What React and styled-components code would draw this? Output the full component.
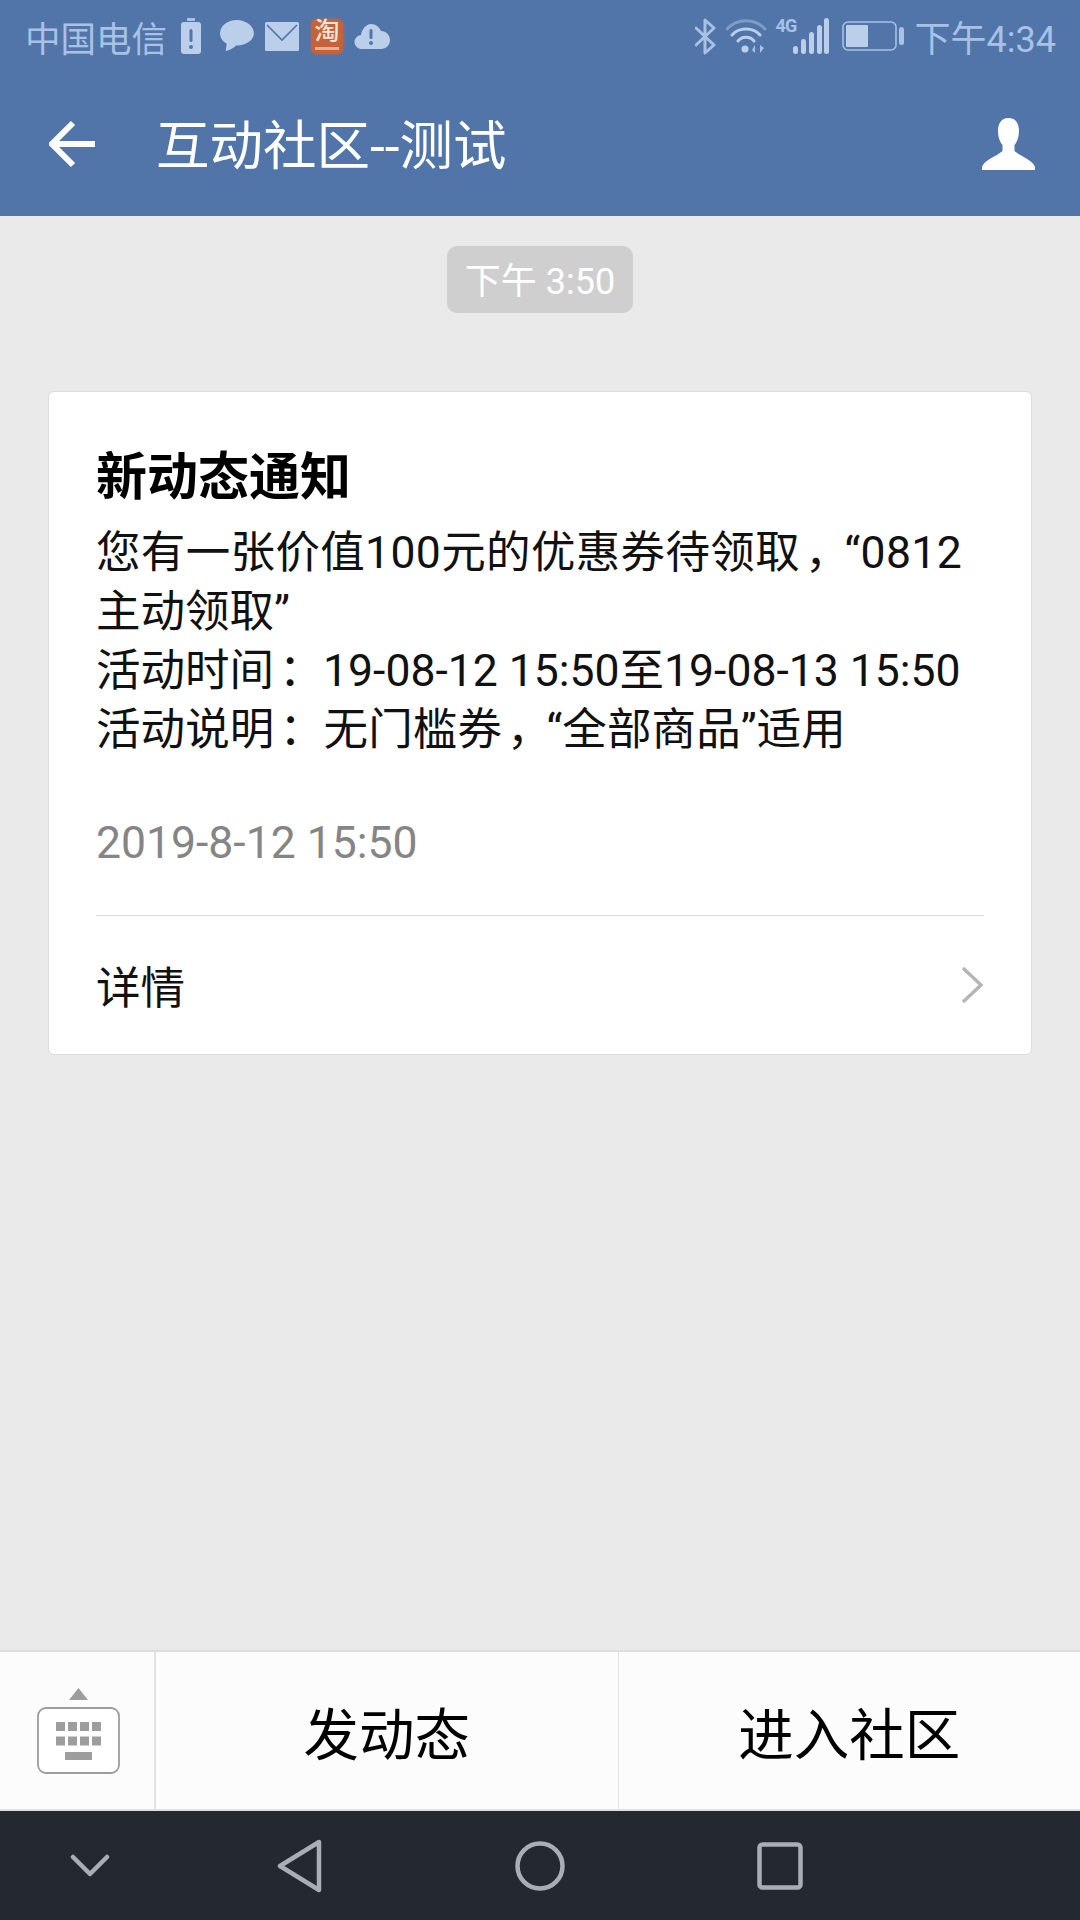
import React from 'react';
import styled, { createGlobalStyle } from 'styled-components';

const GlobalStyle = createGlobalStyle`
  html, body {
    margin: 0;
    padding: 0;
    background: #ebeaeb;
  }
  * {
    box-sizing: border-box;
  }
`;

const FONT = `Roboto, "Noto Sans CJK SC", sans-serif`;

const STATUS = '#a8c1e4';

const BatteryAlert = () => (
  <svg width="20" height="36" viewBox="0 0 20 36">
    <rect x="6" y="0" width="8" height="3" fill={STATUS} />
    <rect x="0" y="4" width="20" height="32" rx="3" fill="#bccfea" />
    <rect x="8.5" y="11" width="3" height="13" rx="1.5" fill="#5175a9" />
    <circle cx="10" cy="29" r="2" fill="#5175a9" />
  </svg>
);

const Bubble = () => (
  <svg width="34" height="32" viewBox="0 0 36 34">
    <path d="M18 0C8 0 0 6 0 14c0 5 3 9 7 11l-1 8c4-1 8-3 11-6h1c10 0 18-6 18-13S28 0 18 0z" fill="#bccfea" />
  </svg>
);

const Mail = () => (
  <svg width="34" height="29" viewBox="0 0 34 29">
    <rect width="34" height="29" rx="1.5" fill="#bccfea" />
    <path d="M2 3l15 15L32 3" fill="none" stroke="#5175a9" strokeWidth="1.6" />
  </svg>
);

const CloudAlert = () => (
  <svg width="36" height="25" viewBox="0 0 36 25">
    <path d="M8 25a7 7 0 0 1-1-14C8 5 12 0 17 0c5 0 8 3 10 7 5 0 9 4 9 9s-4 9-9 9z" fill="#bccfea" />
    <rect x="15.5" y="5" width="3" height="10" rx="1.5" fill="#5175a9" />
    <circle cx="17" cy="19" r="2" fill="#5175a9" />
  </svg>
);

const Bluetooth = () => (
  <svg width="21" height="37" viewBox="1 0 21 37">
    <path d="M2 10l18 17-9 8V2l9 8L2 27" fill="none" stroke={STATUS} strokeWidth="3" strokeLinecap="round" strokeLinejoin="round" />
  </svg>
);

const Wifi = () => (
  <svg width="41" height="36" viewBox="0 0 41 36">
    <path d="M1 11C11 0 29 0 39 11" fill="none" stroke="#7f9cc7" strokeWidth="3" strokeLinecap="round" />
    <path d="M6 17C13 9 27 9 34 17" fill="none" stroke="#bccfea" strokeWidth="3" strokeLinecap="round" />
    <path d="M12 23C16 18 24 18 28 23" fill="none" stroke="#bccfea" strokeWidth="3" strokeLinecap="round" />
    <circle cx="19" cy="31" r="3.5" fill="#bccfea" />
    <path d="M29 35V27l-3 5zM34 27v8l4-5z" fill={STATUS} />
  </svg>
);

const Signal = () => (
  <svg width="36" height="36" viewBox="0 0 36 36">
    <rect x="0" y="28" width="5" height="8" rx="2.5" fill="#bccfea" />
    <rect x="8" y="21" width="5" height="15" rx="2.5" fill="#bccfea" />
    <rect x="16" y="14" width="5" height="22" rx="2.5" fill="#bccfea" />
    <rect x="24" y="7" width="5" height="29" rx="2.5" fill="#bccfea" />
    <rect x="31" y="0" width="5" height="36" rx="2.5" fill="#bccfea" />
  </svg>
);

const Battery = () => (
  <svg width="62" height="30" viewBox="0 0 62 30">
    <rect x="1" y="1" width="53" height="28" rx="5" fill="none" stroke={STATUS} strokeWidth="1.6" />
    <rect x="4" y="4" width="22" height="22" rx="1" fill="#bccfea" />
    <rect x="57" y="6" width="5" height="18" rx="2.5" fill={STATUS} />
  </svg>
);

const BackArrow = () => (
  <svg width="48" height="48" viewBox="0 0 48 48">
    <path d="M46 24H4M24 3L3 24l21 21" fill="none" stroke="#fff" strokeWidth="6" />
  </svg>
);

const UserIcon = () => (
  <svg width="53" height="52" viewBox="0 0 53 52">
    <path d="M26.5 0C19 0 16 6 16 13c0 6 2 11 4.5 14v6C15 38 2 42 0 49v3h53v-3c-2-7-15-11-20.5-16v-6c2.5-3 4.5-8 4.5-14C37 6 34 0 26.5 0z" fill="#fff" />
  </svg>
);

const Chevron = () => (
  <svg width="23" height="38" viewBox="0 0 23 38">
    <path d="M2 2l18 17L2 36" fill="none" stroke="#b5b5b5" strokeWidth="3.4" />
  </svg>
);

const KeyboardIcon = () => (
  <svg width="84" height="86" viewBox="0 0 84 86">
    <path d="M41.5 0l9.5 12H32z" fill="#9d9d9d" />
    <rect x="1" y="20" width="81" height="65" rx="8" fill="#fff" stroke="#9d9d9d" strokeWidth="1.8" />
    {[19, 31, 43, 55].map(x => (
      <g key={x} fill="#9d9d9d">
        <rect x={x} y="34" width="9" height="9" />
        <rect x={x} y="48.5" width="9" height="9" />
      </g>
    ))}
    <rect x="28" y="64" width="27" height="8" fill="#9d9d9d" />
  </svg>
);

const NavHide = () => (
  <svg width="40" height="24" viewBox="0 0 40 24">
    <path d="M3 3l17 17L37 3" fill="none" stroke="#a9aeb6" strokeWidth="4.5" strokeLinecap="round" strokeLinejoin="round" />
  </svg>
);

const NavBack = () => (
  <svg width="46" height="54" viewBox="0 0 46 54">
    <path d="M42 3v48L3 27z" fill="none" stroke="#a9aeb6" strokeWidth="4.5" strokeLinejoin="round" />
  </svg>
);

const NavHome = () => (
  <svg width="50" height="50" viewBox="0 0 50 50">
    <circle cx="25" cy="25" r="22.5" fill="none" stroke="#a9aeb6" strokeWidth="4.5" />
  </svg>
);

const NavRecent = () => (
  <svg width="46" height="48" viewBox="0 0 46 48">
    <rect x="2.5" y="2.5" width="41" height="43" rx="3" fill="none" stroke="#a9aeb6" strokeWidth="4.5" />
  </svg>
);

const App = () => (
  <>
    <GlobalStyle />
    <Screen>
      <Header>
        <StatusBar>
          <StatusGroup>
            <Carrier>中国电信</Carrier>
            <BatteryAlert />
            <BubbleSlot><Bubble /></BubbleSlot>
            <Mail />
            <Taobao>
              <span>淘</span>
              <TaobaoStrip />
            </Taobao>
            <CloudAlert />
          </StatusGroup>
          <StatusGroup>
            <Bluetooth />
            <Wifi />
            <SignalBlock>
              <NetworkTag>4G</NetworkTag>
              <Signal />
            </SignalBlock>
            <Battery />
            <Clock>下午4:34</Clock>
          </StatusGroup>
        </StatusBar>
        <TitleBar>
          <BackButton><BackArrow /></BackButton>
          <Title>互动社区--测试</Title>
          <UserIcon />
        </TitleBar>
      </Header>

      <Feed>
        <TimePill>下午 3:50</TimePill>
        <Card>
          <CardTitle>新动态通知</CardTitle>
          <CardLine $spacing={0.35}>您有一张价值100元的优惠券待领取<Punct>，</Punct>“0812</CardLine>
          <CardLine>主动领取”</CardLine>
          <CardLine>活动时间<Punct>：</Punct>{'\u200a'}19-08-12 15:50至19-08-13 15:50</CardLine>
          <CardLine $spacing={0.1}>活动说明<Punct>：</Punct>{'\u200a'}无门槛券<Punct>，</Punct>“全部商品”适用</CardLine>
          <CardDate>2019-8-12 15:50</CardDate>
          <CardFooter>
            <span>详情</span>
            <Chevron />
          </CardFooter>
        </Card>
      </Feed>

      <ActionBar>
        <KeyboardCell><KeyboardIcon /></KeyboardCell>
        <ActionCell>发动态</ActionCell>
        <ActionCell>进入社区</ActionCell>
      </ActionBar>

      <NavBar>
        <NavItem><NavHide /></NavItem>
        <NavItem><NavBack /></NavItem>
        <NavItem><NavHome /></NavItem>
        <NavItem><NavRecent /></NavItem>
      </NavBar>
    </Screen>
  </>
);

const Screen = styled.div`
  display: flex;
  flex-direction: column;
  width: 1080px;
  height: 1920px;
  overflow: hidden;
  background: #ebeaeb;
  font-family: ${FONT};
`;

const Header = styled.header`
  height: 216px;
  background: #5175a9;
`;

const StatusBar = styled.div`
  display: flex;
  justify-content: space-between;
  align-items: center;
  height: 72px;
  padding: 0 24px 0 25px;
`;

const StatusGroup = styled.div`
  display: flex;
  align-items: center;
  gap: 10px;
`;

const Carrier = styled.span`
  margin-right: 4px;
  font-size: 35.5px;
  color: ${STATUS};
`;

const BubbleSlot = styled.div`
  display: flex;
  margin: 0 1px 0 9px;
`;

const Taobao = styled.div`
  display: flex;
  flex-direction: column;
  align-items: center;
  width: 32px;
  height: 35px;
  margin: 0 1px 0 2px;
  border-radius: 6px;
  background: #c6623a;
  box-shadow: 0 0 3px #b96a4a;
  font-size: 25px;
  line-height: 26px;
  font-weight: 500;
  color: #f8e6d4;
`;

const TaobaoStrip = styled.i`
  width: 24px;
  height: 3px;
  margin-top: 2px;
  background: #e5b096;
`;

const SignalBlock = styled.div`
  position: relative;
  width: 53px;
  height: 36px;
  margin: 0 3px 0 -1px;
  display: flex;
  justify-content: flex-end;
`;

const NetworkTag = styled.span`
  position: absolute;
  top: -3px;
  left: 0;
  font-size: 18px;
  letter-spacing: -1px;
  font-weight: 700;
  color: ${STATUS};
`;

const Clock = styled.span`
  margin-left: 1px;
  font-size: 36px;
  color: ${STATUS};
`;

const TitleBar = styled.div`
  display: flex;
  align-items: center;
  height: 144px;
  padding: 0 45px 0 49px;
`;

const BackButton = styled.div`
  display: flex;
  width: 107px;
`;

const Title = styled.h1`
  flex: 1;
  margin: 0;
  padding-bottom: 5px;
  font-size: 53.5px;
  font-weight: 400;
  color: #fff;
`;

const Feed = styled.main`
  flex: 1;
  display: flex;
  flex-direction: column;
  align-items: center;
  padding: 30px 48px 0;
`;

const TimePill = styled.div`
  display: flex;
  align-items: center;
  justify-content: center;
  width: 186px;
  height: 67px;
  padding-bottom: 3px;
  border-radius: 10px;
  background: #cfcfcf;
  font-size: 36px;
  color: #fff;
`;

const Card = styled.section`
  width: 100%;
  height: 664px;
  margin-top: 78px;
  padding: 51px 47px 0 47px;
  background: #fff;
  border: 1px solid #dcdcdc;
  border-radius: 6px;
`;

const CardTitle = styled.h2`
  margin: 0 0 11px;
  font-size: 51px;
  line-height: 70px;
  font-weight: 700;
  color: #000;
`;

const CardLine = styled.div`
  font-size: 44.5px;
  line-height: 59px;
  letter-spacing: ${props => props.$spacing || 0}px;
  white-space: nowrap;
  color: #111;
`;

// the device font centres these marks in their cell, ours sets them to the left
const Punct = styled.span`
  padding-left: 5px;
  letter-spacing: -5px;
`;

const CardDate = styled.div`
  margin-top: 57px;
  padding-bottom: 46px;
  border-bottom: 1px solid #dddddd;
  font-size: 44.5px;
  line-height: 52px;
  color: #858585;
`;

const CardFooter = styled.div`
  display: flex;
  justify-content: space-between;
  align-items: center;
  height: 139px;
  padding-bottom: 2px;
  font-size: 44.5px;
  color: #111;
`;

const ActionBar = styled.div`
  display: flex;
  height: 161px;
  background: #fdfcfd;
  border-top: 2px solid #dedede;
  border-bottom: 2px solid #dfe0e1;
`;

const KeyboardCell = styled.div`
  display: flex;
  align-items: center;
  justify-content: center;
  width: 156px;
  padding-left: 3px;
  border-right: 2px solid #e2e2e2;
`;

const ActionCell = styled.div`
  flex: 1;
  display: flex;
  align-items: center;
  justify-content: center;
  font-size: 55.5px;
  color: #000;
  & + & {
    border-left: 1px solid #e4e4e4;
  }
`;

const NavBar = styled.nav`
  display: grid;
  grid-template-columns: 180px repeat(3, 240px);
  align-items: center;
  justify-items: center;
  height: 109px;
  background: #232831;
`;

const NavItem = styled.div`
  display: flex;
`;

export default App;
